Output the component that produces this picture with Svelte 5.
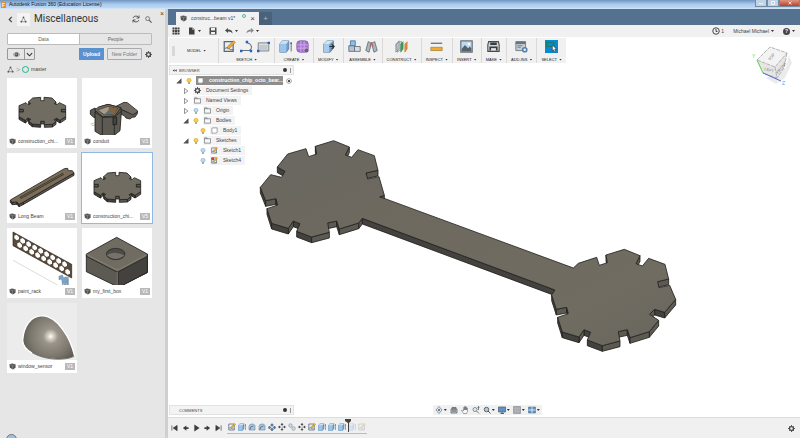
<!-- App.svelte
     CAD workspace: data panel on the left, modelling canvas on the right. -->
<script lang="ts">
  type Point = [number, number];

  interface Part {
    name: string;
    version: string;
    kind: string;
    selected?: boolean;
  }

  interface TreeRow {
    label: string;
    depth: number;
    open?: boolean;
    bulb?: 'on' | 'off';
    icon: string;
  }

  const parts: Part[] = [
    { name: 'construction_chi...', version: 'V1', kind: 'chip' },
    { name: 'conduit', version: 'V3', kind: 'conduit' },
    { name: 'Long Beam', version: 'V1', kind: 'beam' },
    { name: 'construction_chi...', version: 'V5', kind: 'chip', selected: true },
    { name: 'paint_rack', version: 'V1', kind: 'rack' },
    { name: 'my_first_box', version: 'V1', kind: 'box' },
    { name: 'window_sensor', version: 'V1', kind: 'sensor' },
  ];

  const tools = [
    { label: 'SKETCH', icons: ['sketch', 'spline', 'rect'] },
    { label: 'CREATE', icons: ['extrude', 'form'] },
    { label: 'MODIFY', icons: ['press'] },
    { label: 'ASSEMBLE', icons: ['component', 'joint'] },
    { label: 'CONSTRUCT', icons: ['plane'] },
    { label: 'INSPECT', icons: ['measure'] },
    { label: 'INSERT', icons: ['image'] },
    { label: 'MAKE', icons: ['print'] },
    { label: 'ADD-INS', icons: ['script'] },
    { label: 'SELECT', icons: ['select'] },
  ];

  const tree: TreeRow[] = [
    { label: 'Document Settings', depth: 1, open: false, icon: 'gear' },
    { label: 'Named Views', depth: 1, open: false, icon: 'folder' },
    { label: 'Origin', depth: 1, open: false, bulb: 'off', icon: 'folder' },
    { label: 'Bodies', depth: 1, open: true, bulb: 'on', icon: 'folder' },
    { label: 'Body1', depth: 2, bulb: 'on', icon: 'body' },
    { label: 'Sketches', depth: 1, open: true, bulb: 'on', icon: 'folder' },
    { label: 'Sketch1', depth: 2, bulb: 'off', icon: 'sketch' },
    { label: 'Sketch4', depth: 2, bulb: 'off', icon: 'sketchRed' },
  ];

  const playback = ['first', 'prev', 'play', 'next', 'last'];
  const features = ['sketch', 'extrude', 'fillet', 'fillet', 'pattern', 'move', 'mirror', 'move', 'sketch', 'extrude', 'extrude', 'extrude', 'extrude', 'sketch'];
  const rolledBack = 12;

  const navTools = [
    { name: 'orbit', menu: true },
    { name: 'look', menu: false },
    { name: 'hand', menu: false },
    { name: 'zoom', menu: false },
    { name: 'fit', menu: true },
    { name: 'display', menu: true },
    { name: 'grid', menu: true },
    { name: 'views', menu: true },
  ];

  // Everything is drawn on a 16 x 16 grid
  const icons: Record<string, string> = {
    sketch: '<path d="M1.500 2h11v12h-11z" fill="#e9edf0" stroke="#5b6670" stroke-width="1.500"/><path d="M2 11c4-4 5 2 11 1" fill="none" stroke="#33719f" stroke-width="1.200"/><path d="M5 10l2 1 8-8-2-2-7 7z" fill="#f2ae35" stroke="#96651b" stroke-width=".8"/>',
    sketchRed: '<path d="M1.500 2h11v12h-11z" fill="#e9edf0" stroke="#5b6670" stroke-width="1.500"/><path d="M1 1h6v6H1z" fill="#d83828"/><path d="M2 12c4-4 5 2 11 1" fill="none" stroke="#33719f" stroke-width="1.200"/><path d="M5 10l2 1 8-8-2-2-7 7z" fill="#f2ae35" stroke="#96651b" stroke-width=".8"/>',
    spline: '<path d="M2 13h7c7 0 7-8-1-10" fill="none" stroke="#68717a" stroke-width="1.300"/><path d="M0 12h3v3H0zM12 12h3v3h-3zM7 1h3v3H7z" fill="#2165c4"/>',
    rect: '<path d="M1.500 3.500h13v10h-13z" fill="#dce0e4" stroke="#68717a"/><path d="M3 6h10v6H3z" fill="#c3c9cf"/><path d="M0 12h3v3H0zM13 2h3v3h-3z" fill="#2165c4"/>',
    extrude: '<path d="M1 5l3-4h8v10l-3 4H1z" fill="#6b9fcf" stroke="#426c94" stroke-width=".8"/><path d="M1 5h8v10H1z" fill="#9bc4e8"/><path d="M1 5l3-4h8L9 5z" fill="#c9e0f4"/><path d="M15 3v11M14 5l1-2 1 2" stroke="#555" fill="none"/>',
    form: '<path d="M1 5q0-4 4-4h6q4 0 4 4v6q0 4-4 4H5q-4 0-4-4z" fill="#a774d0" stroke="#8656ae"/><path d="M1 6h14M1 10h14M6 1v14M10 1v14" stroke="#ddc2f2" fill="none" stroke-width=".8"/><circle cx="13" cy="13" r="2.500" fill="#6f5f78"/>',
    press: '<path d="M2 5l4-4h8v9l-4 5H2z" fill="#719dc3" stroke="#456c90" stroke-width=".8"/><path d="M2 5h7v10H2z" fill="#a9cbe9"/><path d="M2 5l4-4h8l-5 4z" fill="#d1e2f0"/><path d="M9 8h6M12 5l3 3-3 3" stroke="#27323c" fill="none" stroke-width="1.500"/>',
    component: '<path d="M1 7h7v7H1z" fill="#b8c2cc" stroke="#596775"/><path d="M3 1h6v6H3z" fill="#8fbfe5" stroke="#44749e"/><path d="M8 8h7v6H8z" fill="#d7dce1" stroke="#596775"/>',
    joint: '<path d="M1 13L4 2l4 2-3 11zM15 13L12 2 8 4l3 11z" fill="#aeb6bd" stroke="#606b74"/><path d="M6 8l2-5 2 5" fill="none" stroke="#c65a43" stroke-width="1.200"/>',
    plane: '<path d="M1 5l4-4v10l-4 4zM2 5l4-3h2v9l-5 4z" fill="#cbd1d6" stroke="#6b747b" stroke-width=".7"/><path d="M7 5l3-3v9l-3 4z" fill="#3aa25c" stroke="#1f6e39" stroke-width=".5"/><path d="M12 5l3-3v9l-3 4z" fill="#e98b39" stroke="#ae6225" stroke-width=".5"/>',
    measure: '<path d="M1 4h14" fill="none" stroke="#62686d" stroke-width="1.500"/><path d="M1 9h14v4H1z" fill="#efad2f" stroke="#9e752a" stroke-width=".8"/>',
    image: '<path d="M1 1h14v14H1z" fill="#bddaf1" stroke="#69737a" stroke-width="1.500"/><path d="M2 11l4-5 4 4 2-2 2 2v4H2z" fill="#56616a"/><circle cx="11" cy="5" r="1.500" fill="#fff"/>',
    print: '<path d="M2 2h12l1 4v8H1V6z" fill="#cfd2d5" stroke="#44494d" stroke-width="1.300"/><path d="M4 3h8v3H4zM3 8h10v5H3z" fill="#373d42"/><path d="M5 10h6v3H5z" fill="#e2e5e8"/>',
    script: '<path d="M1 2h12v11H1z" fill="#c4cbd1" stroke="#67717b"/><path d="M1 2h12v3H1z" fill="#68747e"/><path d="M3 7h6M3 9h4" stroke="#68747e"/><circle cx="12" cy="12" r="2.500" fill="#f2f4f6" stroke="#5380ad" stroke-width="2"/>',
    select: '<path d="M0 0h16v16H0z" fill="#068bd3"/><path d="M2 3h9v5H2z" fill="none" stroke="#147b68" stroke-width="1.300"/><path d="M9 6l5 5-2 .5 1.500 3-1.500.5-1.500-3L9 14z" fill="#fff" stroke="#263645" stroke-width=".8"/>',
    gear: '<circle cx="8" cy="8" r="4.500" fill="none" stroke="#464646" stroke-width="3"/><path d="M8 0v3M8 13v3M0 8h3M13 8h3M2.300 2.300l2 2M11.700 11.700l2 2M2.300 13.700l2-2M11.700 4.300l2-2" stroke="#464646" stroke-width="2"/>',
    folder: '<path d="M1 4h14v10H1zM1 4V2h6l1 2" fill="#f8f8f8" stroke="#656a6e" stroke-width="1.500"/>',
    body: '<path d="M2 4q0-2 2-2h10v9q0 3-3 3H2z" fill="#fff" stroke="#777" stroke-width="1.500"/>',
    fillet: '<path d="M2 14V7q0-5 6-5h3l3 3v9z" fill="#a8c8e4" stroke="#55728d"/><path d="M4 13q0-7 7-7" fill="none" stroke="#415c74" stroke-width="1.500"/>',
    pattern: '<path d="M8 1l3 3-3 3-3-3zM3 6l3 3-3 3-3-3zM13 6l3 3-3 3-3-3zM8 10l3 3-3 3-3-3z" fill="#4b7aa8" stroke="#2d465f" stroke-width=".7"/>',
    move: '<path d="M8 1v14M1 8h14" stroke="#474e54" stroke-width="1.500" stroke-dasharray="5 3"/><path d="M5 4l3-4 3 4zM5 12l3 4 3-4zM4 5L0 8l4 3zM12 5l4 3-4 3z" fill="#474e54"/>',
    mirror: '<circle cx="5" cy="5" r="3.500" fill="#c8dced" stroke="#6b8195"/><circle cx="11" cy="11" r="3.500" fill="#ddd" stroke="#6b747c"/>',
    first: '<path d="M2 2v12M14 2L5 8l9 6z" fill="#3c3c3c" stroke="#3c3c3c" stroke-width="1.500"/>',
    prev: '<path d="M10 2L2 8l8 6zM10 6h5v4h-5z" fill="#3c3c3c"/>',
    play: '<path d="M3 0l12 8-12 8z" fill="#3c3c3c"/>',
    next: '<path d="M6 2l8 6-8 6zM1 6h5v4H1z" fill="#3c3c3c"/>',
    last: '<path d="M14 2v12M2 2l9 6-9 6z" fill="#3c3c3c" stroke="#3c3c3c" stroke-width="1.500"/>',
    orbit: '<path d="M8 1l6 7-6 7-6-7z" fill="none" stroke="#69747e" stroke-width="1.400"/><circle cx="8" cy="8" r="2.500" fill="#4f85b6"/>',
    look: '<path d="M2 6h12v8H2zM4 3h8v3H4z" fill="#c6cbcf" stroke="#555d64" stroke-width="1.500"/><path d="M4 10h8" stroke="#555d64" stroke-width="2"/>',
    hand: '<path d="M5 15L1 9l2-1 2 2V3h2v5-7h2v7-6h2v6-4h2v7l-2 4z" fill="#f7f7f7" stroke="#5b6268" stroke-width="1.100"/>',
    zoom: '<circle cx="6" cy="7" r="4" fill="#e3edf5" stroke="#657079" stroke-width="1.500"/><path d="M9 10l5 5M13 1v7M11 3l2-2 2 2" fill="none" stroke="#4e565d" stroke-width="1.500"/>',
    fit: '<circle cx="7" cy="7" r="4.500" fill="#b7c7d5" stroke="#5d666e" stroke-width="2"/><path d="M10 10l5 5" stroke="#4e565d" stroke-width="2"/>',
    display: '<path d="M1 2h14v10H1z" fill="#5b94c8" stroke="#53616f" stroke-width="1.500"/><path d="M5 15h7M8 12v3" stroke="#53616f" stroke-width="2"/>',
    grid: '<path d="M1 1h14v14H1z" fill="#a4a9ae" stroke="#737a80"/><path d="M1 5h14M1 10h14M5 1v14M10 1v14" stroke="#c4c8cb" stroke-width=".7"/>',
    views: '<path d="M1 2h14v12H1z" fill="#5d91c2" stroke="#3c688f"/><path d="M8 2v12M1 8h14" stroke="#fff" stroke-width="1.500"/>',
    apps: '<path d="M1 1h4v4H1zM6 1h4v4H6zM11 1h4v4h-4zM1 6h4v4H1zM6 6h4v4H6zM11 6h4v4h-4zM1 11h4v4H1zM6 11h4v4H6zM11 11h4v4h-4z" fill="#3f3f3f"/>',
    file: '<path d="M2 1h7l4 4v10H2z" fill="#3f3f3f"/><path d="M9 1v4h4" fill="none" stroke="#eee"/>',
    save: '<path d="M1 1h14v14H1z" fill="#494949"/><path d="M4 2h8v5H4zM4 10h8v4H4z" fill="#f1f1f1"/>',
    undo: '<path d="M6 2L0 7l6 5V9q6-1 9 4 0-8-9-8z" fill="#4a4a4a"/>',
    redo: '<path d="M10 2l6 5-6 5V9q-6-1-9 4 0-8 9-8z" fill="#8c8c8c"/>',
    chevron: '<path d="M11 2L5 8l6 6" fill="none" stroke="#3c3c3c" stroke-width="2.500"/>',
    down: '<path d="M2 5l6 6 6-6" fill="none" stroke="#333" stroke-width="2.500"/>',
    project: '<path d="M8 3L3 13h10z" fill="none" stroke="#555" stroke-width="1.200"/><circle cx="8" cy="3" r="2" fill="#555"/><circle cx="3" cy="13" r="2" fill="#555"/><circle cx="13" cy="13" r="2" fill="#555"/>',
    refresh: '<path d="M14 6A6.500 6.500 0 0 0 2 6M2 10a6.500 6.500 0 0 0 12 0M14 1v5h-5M2 15v-5h5" fill="none" stroke="#444" stroke-width="1.700"/>',
    search: '<circle cx="6" cy="6" r="4.500" fill="none" stroke="#555" stroke-width="1.700"/><path d="M9.500 9.500L15 15" stroke="#555" stroke-width="2.500"/>',
    eye: '<path d="M0 8q8-10 16 0-8 10-16 0z" fill="none" stroke="#555"/><circle cx="8" cy="8" r="4.500" fill="#555"/><circle cx="7" cy="7" r="1.500" fill="#ddd"/>',
    cube: '<path d="M1 3l6-2 8 2v8l-6 4-7-4z" fill="#555"/><path d="M1 3l7 3v9M8 6l7-3" fill="none" stroke="#aaa"/>',
    clock: '<circle cx="8" cy="8" r="6.500" fill="none" stroke="#444" stroke-width="2"/><path d="M8 4v5h3" fill="none" stroke="#444" stroke-width="2"/>',
    bulbOn: '<path d="M5 11Q0 6 4 2q4-3 8 0 4 4-1 9z" fill="#ffcf3c" stroke="#b98b1d"/><path d="M6 12h4v3H6z" fill="#666"/>',
    bulbOff: '<path d="M5 11Q0 6 4 2q4-3 8 0 4 4-1 9z" fill="#bcdcf6" stroke="#5f8cb5"/><path d="M6 12h4v3H6z" fill="#666"/>',
    target: '<circle cx="8" cy="8" r="6.500" fill="#fff" stroke="#555" stroke-width="1.300"/><circle cx="8" cy="8" r="3" fill="#333"/>',
    closed: '<path d="M4 1l9 7-9 7z" fill="#fff" stroke="#444" stroke-width="1.500"/>',
    opened: '<path d="M14 2v12H2z" fill="#555" stroke="#333"/>',
    rewind: '<path d="M8 4L2 8l6 4zM15 4L9 8l6 4z" fill="#444"/>',
  };

  const discRight: Point[] = [
    [130, 99], [145, 85], [200, 67], [208, 91], [232, 83], [228, 60], [283, 43], [330, 62], [318, 86], [337, 93],
    [356, 70], [405, 88], [416, 132], [383, 140], [387, 158], [419, 151], [437, 193], [404, 232], [374, 223],
    [359, 238], [386, 256], [358, 290], [300, 308], [292, 284], [265, 290], [270, 318], [217, 332], [172, 315],
    [182, 292], [162, 284], [147, 306], [97, 291], [83, 247], [115, 236], [110, 217], [79, 223], [65, 180], [75, 165],
  ];

  const discLeft: Point[] = [
    [369, 276], [358, 290], [300, 308], [292, 284], [265, 290], [270, 318], [217, 332], [172, 315], [182, 292],
    [162, 284], [147, 306], [97, 291], [83, 247], [115, 236], [110, 217], [79, 223], [63, 183], [94, 145], [127, 153],
    [137, 135], [114, 122], [145, 83], [200, 67], [208, 91], [232, 83], [228, 60], [283, 43], [330, 62], [318, 86],
    [337, 93], [356, 70], [405, 88], [416, 132], [380, 140], [385, 158], [419, 151], [435, 207], [421, 212], [437, 217],
  ];

  const shift = (points: Point[], dx: number, dy: number): Point[] => points.map(([x, y]) => [x + dx, y + dy]);
  const join = (points: Point[]) => points.map((p) => p.join(',')).join(' ');

  // Side walls of a flat plate; only edges running leftwards face the camera
  function walls(points: Point[], depth: number) {
    const out: { shape: string; y: number; dark: boolean }[] = [];
    points.forEach((a, i) => {
      const b = points[(i + 1) % points.length];
      if (b[0] >= a[0]) return;
      out.push({
        shape: join([a, b, [b[0], b[1] + depth], [a[0], a[1] + depth]]),
        y: a[1] + b[1],
        dark: b[1] < a[1],
      });
    });
    return out.sort((m, n) => m.y - n.y);
  }

  const model = [...shift(discLeft, -47, -11), ...shift(discRight, 825, 315)];

  const chip: Point[] = [
    [77, 60], [101, 58], [101, 68], [111, 68], [111, 58], [135, 60], [147, 72], [142, 77], [150, 80], [157, 74],
    [176, 83], [176, 94], [163, 94], [163, 102], [176, 102], [176, 116], [159, 127], [149, 121], [141, 125],
    [147, 131], [136, 139], [112, 140], [112, 130], [101, 130], [101, 140], [76, 138], [65, 129], [71, 124],
    [63, 120], [55, 127], [36, 116], [36, 102], [49, 102], [49, 94], [36, 94], [36, 83], [57, 74], [63, 80],
    [71, 77], [65, 71],
  ];
  const longBeam: Point[] = [
    [10, 141], [172, 47], [182, 46], [184, 53], [196, 53], [201, 60], [48, 148], [36, 154], [30, 147], [16, 148],
  ];

  // Two staggered rows of holes across the rack
  const holes = Array.from({ length: 18 }, (_, i) => {
    const col = Math.floor(i / 2);
    return { x: 29 + col * 18 + (i % 2) * 9, y: 28 + col * 10 + (i % 2) * 23 };
  });

  let tab = $state('Data');
</script>

{#snippet icon(name: string)}
  <svg class="icon" viewBox="0 0 16 16" aria-hidden="true">{@html icons[name]}</svg>
{/snippet}

{#snippet plate(points: Point[], depth: number)}
  {#each walls(points, depth) as wall}
    <polygon class="wall" class:dark={wall.dark} points={wall.shape} />
  {/each}
  <polygon class="face" points={join(points)} />
{/snippet}

{#snippet dock(title: string)}
  <div class="dock">
    <span class="dock-lead">{#if title === 'BROWSER'}{@render icon('rewind')}{/if}</span>
    <span>{title}</span>
    <button class="dot" aria-label="Options for {title}"></button>
    <i class="grip"></i>
  </div>
{/snippet}

<div class="app">
  <header class="titlebar">
    <span class="logo">F</span>
    <span>Autodesk Fusion 360 (Education License)</span>
    <div class="window-buttons">
      <button aria-label="Minimize"><svg viewBox="0 0 12 8"><path d="M3 5h6" /></svg></button>
      <button aria-label="Restore"><svg viewBox="0 0 12 8"><path d="M4 2h4v4H4z" /></svg></button>
      <button class="quit" aria-label="Quit"><svg viewBox="0 0 12 8"><path d="M4 2l4 4M8 2L4 6" /></svg></button>
    </div>
  </header>

  <div class="workspace">
    <aside class="data-panel">
      <div class="panel-head">
        <button class="plain" aria-label="Back">{@render icon('chevron')}</button>
        <span class="project">{@render icon('project')}</span>
        <h1>Miscellaneous</h1>
        <button class="plain large" aria-label="Refresh">{@render icon('refresh')}</button>
        <button class="plain" aria-label="Search">{@render icon('search')}</button>
        <button class="close" aria-label="Close panel">×</button>
      </div>

      <div class="tabs">
        {#each ['Data', 'People'] as name}
          <button class:active={tab === name} onclick={() => (tab = name)}>{name}</button>
        {/each}
      </div>

      <div class="actions">
        <div class="split">
          <button aria-label="Show">{@render icon('eye')}</button>
          <button aria-label="Show options">{@render icon('down')}</button>
        </div>
        <button class="upload">Upload</button>
        <button class="new-folder">New Folder</button>
        <button class="plain" aria-label="Settings">{@render icon('gear')}</button>
      </div>

      <nav class="crumbs">
        {@render icon('project')}
        <span class="sep">&gt;</span>
        <i class="ring"></i>
        <a href="#master">master</a>
      </nav>

      <div class="cards">
        {#each parts as part}
          <article class="card" class:selected={part.selected}>
            <svg class="thumb" class:shaded={part.kind === 'sensor'} viewBox="0 0 210 171" aria-hidden="true">
              {#if part.kind === 'chip'}
                {@render plate(chip, 8)}
              {:else if part.kind === 'beam'}
                <g class="bronze">
                  {@render plate(longBeam, 7)}
                </g>
                <path class="slot" d="M40 135L169 62" />
                <path class="slot-floor" d="M42 134L167 63" />
              {:else if part.kind === 'conduit'}
                <path d="M26 139l9-4M30 143l8-2M98 170l10 3" stroke="#bbb" stroke-width="3" />
                <path class="wall" d="M25 97l14-7 8 10-4 20-8-2-10-9z" />
                <path class="wall" d="M101 88l51 20 14-9v8l-7 10-9 1-6 5-12-3-4-6-27-14z" />
                <path class="face" d="M100 86l26-13 10 1 30 24v5l-14 7z" />
                <path class="wall" d="M39 102l11-14 28-9 39 11 1 12-4 56-18 14-35 1-22-13z" />
                <path d="M39 102l22 16 36-1v54M61 118v53M97 117l20-16" fill="none" stroke="#25231f" stroke-width="2.500" />
                <path class="face" d="M38 96l12-9 28-8 39 10-19 25-36 2z" />
                <path d="M47 96l31-11 30 7-14 17-28 1z" fill="#a79a88" stroke="#332b22" stroke-width="2" />
                <path d="M80 86l27 7-13 16-14-10z" fill="#83633a" />
                <path d="M66 110l14-14 14 13z" fill="#5f6d6e" />
                <path class="wall dark" d="M93 117h11v22l-11 2z" />
              {:else if part.kind === 'rack'}
                <path d="M18 97l135 75" stroke="#ccc" stroke-width="2" />
                <path class="rack" d="M18 12l176 97v41L18 53z" />
                {#each holes as hole}
                  <polygon fill="#fff" points={join([[hole.x - 7, hole.y - 5], [hole.x, hole.y - 8], [hole.x + 7, hole.y - 1], [hole.x + 7, hole.y + 6], [hole.x, hole.y + 9], [hole.x - 7, hole.y + 3]])} />
                {/each}
                <path d="M156 145l10-4 3 8 8-2 7 2v26h-4v-18l-4 18h-4v-16l-5 14-3-20-8 2z" fill="#7aa6cd" stroke="#5f7f9a" stroke-width="1.500" />
              {:else if part.kind === 'box'}
                <path d="M20 134l86 42 90-44-90-10z" fill="#ddd" />
                <path class="wall" d="M13 82l95 50 88-50v52l-78 39q-10 5-18 0l-87-42z" />
                <path class="wall dark" d="M108 130l88-51v54l-80 42-8-3z" />
                <path class="face" d="M13 78l91-50 92 50v7l-83 44q-7 5-14 0L13 85z" />
                <path d="M17 81l82 42q8 4 15 0l78-42M106 130v45" fill="none" stroke="#8f8a7f" stroke-width="2" />
                <ellipse cx="101" cy="78" rx="28" ry="17" fill="#4e4b46" stroke="#222" stroke-width="2" />
                <path d="M74 82q20-16 54 0-27 22-54 0z" fill="#777269" />
              {:else}
                <defs>
                  <radialGradient id="dome" gradientUnits="userSpaceOnUse" cx="131" cy="100" r="90">
                    <stop offset="0" stop-color="#fffdf8" />
                    <stop offset=".1" stop-color="#d5cfc6" />
                    <stop offset=".25" stop-color="#9a948b" />
                    <stop offset=".65" stop-color="#7d796f" />
                    <stop offset="1" stop-color="#5a5750" />
                  </radialGradient>
                </defs>
                <path d="M47 112C50 70 70 38 108 38c42 4 82 62 95 122-28 16-93 12-128-10q-27-15-28-38z" fill="url(#dome)" stroke="#fff" stroke-width="4" />
                <path d="M75 149c35 22 98 26 127 11" fill="none" stroke="#43413d" stroke-width="2" />
              {/if}
            </svg>
            <footer>
              {@render icon('cube')}
              <span class="part-name">{part.name}</span>
              <span class="version">{part.version}</span>
            </footer>
          </article>
        {/each}
      </div>
      <i class="badge"></i>
    </aside>

    <main>
      <div class="doc-tabs">
        <div class="doc-tab">
          {@render icon('cube')}
          <span>construc...beam v1*</span>
          <i class="status"></i>
          <button aria-label="Close document">×</button>
        </div>
        <button class="add-tab" aria-label="New document">+</button>
      </div>

      <div class="quick">
        <button aria-label="Show data panel">{@render icon('apps')}</button>
        <button aria-label="File">{@render icon('file')}<i class="caret"></i></button>
        <button aria-label="Save">{@render icon('save')}</button>
        <button aria-label="Undo">{@render icon('undo')}<i class="caret"></i></button>
        <button aria-label="Redo">{@render icon('redo')}<i class="caret"></i></button>
        <div class="account">
          <button aria-label="Job status">{@render icon('clock')}1</button>
          <button>Michael Michael<i class="caret"></i></button>
          <button aria-label="Help"><b class="help">?</b><i class="caret"></i></button>
        </div>
      </div>

      <div class="stage">
        <div class="toolbar">
          <i class="handle"></i>
          <button class="mode">MODEL<i class="caret"></i></button>
          {#each tools as group}
            <div class="group">
              <div class="group-icons">
                {#each group.icons as name}
                  <button aria-label={name}>{@render icon(name)}</button>
                {/each}
              </div>
              <button class="menu">{group.label}<i class="caret"></i></button>
            </div>
          {/each}
        </div>

        <div class="viewport">
          <svg class="model" viewBox="168 63 632 354" role="img" aria-label="construction_chip_octo_beam">
            <defs>
              <linearGradient id="steel" x1="0" y1="0" x2="1" y2="1">
                <stop offset="0" stop-color="#6a6762" />
                <stop offset=".3" stop-color="#6d695f" />
                <stop offset=".8" stop-color="#706c61" />
                <stop offset="1" stop-color="#68655e" />
              </linearGradient>
            </defs>
            <g transform="translate(255 130) scale(.33333)">
              {@render plate(model, 17)}
            </g>
          </svg>

          <section class="browser">
            {@render dock('BROWSER')}
            <div class="row root">
              {@render icon('opened')}
              {@render icon('bulbOn')}
              <span class="root-label">{@render icon('body')}<span>construction_chip_octo_bear...</span></span>
              {@render icon('target')}
            </div>
            {#each tree as row}
              <div class="row" class:nested={row.depth === 2}>
                {#if row.open !== undefined}
                  {@render icon(row.open ? 'opened' : 'closed')}
                {/if}
                {#if row.bulb}
                  {@render icon(row.bulb === 'on' ? 'bulbOn' : 'bulbOff')}
                {/if}
                <span class="node">{@render icon(row.icon)}<span>{row.label}</span></span>
              </div>
            {/each}
          </section>

          <div class="bottom">
            {@render dock('COMMENTS')}
            <div class="nav-bar">
              {#each navTools as tool}
                <button aria-label={tool.name}>{@render icon(tool.name)}{#if tool.menu}<i class="caret"></i>{/if}</button>
              {/each}
            </div>
          </div>
        </div>

        <svg class="view-cube" viewBox="0 0 50 44" aria-label="View cube">
          <path d="M20 33l20-10 3-13 3 8-7 15-9 6z" fill="#ddd" opacity=".6" />
          <path d="M11 15L24 2l17 6-3 15-7 10-14-5z" fill="#e6e6e6" />
          <path d="M11 15L24 2l17 6-12 14z" fill="#f3f3f3" />
          <path d="M11 15L24 2l17 6-12 14zM29 22l2 11-14-5-6-13M41 8l-3 15-7 10" fill="none" stroke="#999" stroke-width=".7" stroke-dasharray="4 1" />
          <text x="24" y="16" transform="rotate(-50 24 16)">TOP</text>
          <text x="18" y="25" transform="rotate(15 18 25)">LEFT</text>
          <text x="32" y="29" transform="rotate(-50 32 29)">FRONT</text>
          <path d="M17 28l-6-13" stroke="#5be35b" />
          <path d="M17 28l18 8" stroke="#5267d8" />
          <text class="axis-y" x="6" y="13">Y</text>
          <text class="axis-z" x="36" y="40">Z</text>
        </svg>
      </div>

      <footer class="timeline">
        <div class="playback">
          {#each playback as name}
            <button aria-label={name}>{@render icon(name)}</button>
          {/each}
        </div>
        <div class="features">
          {#each features as feature, i}
            <span class="feature" class:faded={i >= rolledBack}>{@render icon(feature)}</span>
          {/each}
          <svg class="marker" viewBox="0 0 6 13" aria-hidden="true"><path d="M0 0h6v2L4 4v9H3V4L0 2z" /></svg>
        </div>
        <button class="prefs" aria-label="Preferences">{@render icon('gear')}</button>
      </footer>
    </main>
  </div>
</div>

<style>
  :global(body) {
    background: #fff;
  }

  .app {
    display: flex;
    flex-direction: column;
    height: 100vh;
    overflow: hidden;
    font-family: 'Liberation Sans', Arial, sans-serif;
    font-size: 5px;
    line-height: 7px;
    color: #444;
  }

  .app :global(*) {
    box-sizing: border-box;
  }

  button {
    display: flex;
    align-items: center;
    justify-content: center;
    padding: 0;
    border: 0;
    background: none;
    font: inherit;
    color: inherit;
  }

  a {
    color: inherit;
    text-decoration: none;
  }

  .icon {
    display: block;
    flex: none;
    width: 7px;
    height: 7px;
  }

  .caret {
    width: 3px;
    height: 2px;
    margin-left: 2px;
    background: #333;
    clip-path: polygon(0 0, 100% 0, 50% 100%);
  }

  /* Window frame */
  .titlebar {
    display: flex;
    flex: none;
    align-items: center;
    gap: 3px;
    height: 9px;
    padding-left: 1px;
    background: linear-gradient(#7096c2, #8fb1d8 25%, #a9cbef 45%, #bad8f5 85%, #dbe9f6);
    color: #111;
  }

  .logo {
    width: 5px;
    height: 6px;
    background: #e98a24;
    color: #fff;
    font-weight: 700;
    text-align: center;
    line-height: 6px;
  }

  .window-buttons {
    display: flex;
    align-self: flex-start;
    margin-left: auto;
  }

  .window-buttons button {
    width: 12px;
    height: 7px;
    border: 1px solid #718ba7;
    border-top: 0;
    background: #c2d3e5;
  }

  .window-buttons .quit {
    width: 21px;
    background: linear-gradient(#dc9582, #bf3f24);
  }

  .window-buttons svg {
    width: 10px;
    height: 6px;
    fill: none;
    stroke: #fff;
  }

  .workspace {
    display: flex;
    flex: 1;
    min-height: 0;
  }

  /* Data panel */
  .data-panel {
    position: relative;
    flex: none;
    width: 168px;
    padding: 3px 13px 0 7px;
    border-right: 3px solid #cfcfcf;
    background: #e6e6e6;
    overflow: hidden;
  }

  .panel-head {
    display: flex;
    align-items: center;
    gap: 3px;
    height: 14px;
  }

  .project {
    display: grid;
    place-items: center;
    width: 13px;
    height: 13px;
    margin-right: 1px;
    background: #f4f4f4;
  }

  h1 {
    flex: 1;
    margin: 0;
    font-family: Roboto, 'Liberation Sans', sans-serif;
    font-size: 10px;
    font-weight: 400;
    line-height: 14px;
    color: #333;
  }

  .large .icon {
    width: 8px;
    height: 8px;
    margin-right: 2px;
  }

  .close {
    position: absolute;
    top: 1px;
    right: 1px;
    font-size: 7px;
  }

  .tabs {
    display: flex;
    height: 12px;
    margin-top: 7px;
    border: 1px solid #bbb;
    border-radius: 1px;
  }

  .tabs button {
    flex: 1;
    color: #666;
  }

  .tabs .active {
    background: #fff;
    border-right: 1px solid #bbb;
  }

  .actions {
    display: flex;
    align-items: center;
    gap: 3px;
    height: 12px;
    margin-top: 3px;
  }

  .split {
    display: flex;
    height: 12px;
    margin-right: auto;
    border: 1px solid #999;
    border-radius: 1px;
  }

  .split button {
    width: 16px;
  }

  .split button + button {
    width: 10px;
    border-left: 1px solid #999;
  }

  .upload {
    width: 25px;
    height: 12px;
    background: #5a91cf;
    color: #fff;
    font-weight: 700;
  }

  .new-folder {
    width: 35px;
    height: 12px;
    border: 1px solid #aaa;
    border-radius: 1px;
    color: #777;
  }

  .crumbs {
    display: flex;
    align-items: center;
    gap: 2px;
    height: 7px;
    margin: 6px 0 5px;
  }

  .sep {
    color: #999;
    font-size: 7px;
  }

  .ring {
    width: 7px;
    height: 7px;
    border: 1px solid #20b193;
    border-radius: 50%;
  }

  .cards {
    display: grid;
    grid-template-columns: 1fr 1fr;
    gap: 5px;
  }

  .card {
    background: #fff;
    outline: 1px solid transparent;
  }

  .card.selected {
    outline-color: #91b9e8;
  }

  .thumb {
    display: block;
    width: 100%;
    height: 57px;
  }

  .shaded {
    background: #ececec;
  }

  .face {
    fill: #706c61;
    stroke: #24231f;
    stroke-width: 2.5;
    stroke-linejoin: round;
  }

  .wall {
    fill: #5d5a54;
    stroke: #1f1e1c;
    stroke-width: 2.5;
    stroke-linejoin: round;
  }

  .wall.dark {
    fill: #44423e;
  }

  .model .face {
    fill: url(#steel);
  }

  .bronze .face {
    fill: #7b6d5a;
  }

  .slot {
    fill: none;
    stroke: #3b352b;
    stroke-width: 7;
  }

  .slot-floor {
    fill: none;
    stroke: #6a5f50;
    stroke-width: 3;
  }

  .rack {
    fill: #594b3c;
    stroke: #2c241c;
    stroke-width: 2;
  }

  .card footer {
    display: flex;
    align-items: center;
    gap: 2px;
    height: 13px;
    padding: 0 2px;
  }

  .part-name {
    flex: 1;
    white-space: nowrap;
  }

  .version {
    width: 10px;
    background: #b8b8b8;
    color: #fff;
    text-align: center;
  }

  .badge {
    position: absolute;
    left: 6px;
    bottom: -7px;
    width: 11px;
    height: 11px;
    border: 1px solid #777;
    border-radius: 50%;
    background: #9dbfe6;
  }

  /* Document area */
  main {
    display: flex;
    flex: 1;
    flex-direction: column;
    min-width: 0;
  }

  .doc-tabs {
    display: flex;
    flex: none;
    align-items: flex-end;
    height: 16px;
    padding-left: 8px;
    background: #54728f;
  }

  .doc-tab {
    display: flex;
    align-items: center;
    gap: 4px;
    width: 83px;
    height: 13px;
    padding: 0 4px;
    background: #f1f1f1;
    white-space: nowrap;
  }

  .doc-tab button {
    margin-left: auto;
    font-size: 8px;
  }

  .status {
    width: 4px;
    height: 4px;
    margin: 0 0 5px 3px;
    border: 1px solid #52b8a0;
    border-radius: 50%;
  }

  .add-tab {
    width: 13px;
    height: 13px;
    background: #496179;
    color: #adbdcc;
    font-size: 8px;
  }

  .quick {
    display: flex;
    flex: none;
    align-items: center;
    gap: 8px;
    height: 12px;
    padding: 0 5px 0 4px;
    background: #f1f1f1;
  }

  .quick .icon {
    width: 8px;
    height: 8px;
  }

  .account {
    display: flex;
    gap: 9px;
    margin-left: auto;
  }

  .account .icon {
    margin-right: 1px;
  }

  .help {
    width: 7px;
    height: 7px;
    border-radius: 50%;
    background: #444;
    color: #fff;
  }

  .stage {
    position: relative;
    display: flex;
    flex: 1;
    flex-direction: column;
    min-height: 0;
  }

  .toolbar {
    display: flex;
    align-self: flex-start;
    height: 25px;
    margin: 1px 0 0 1px;
    background: #f1f1f1;
    font-size: 4px;
    color: #222;
  }

  .handle {
    align-self: center;
    width: 3px;
    height: 10px;
    margin-left: 3px;
    background: #d8d8d8;
  }

  .mode {
    width: 43px;
  }

  .group {
    display: flex;
    flex-direction: column;
    align-items: center;
    justify-content: space-between;
    padding: 2px 4px 0;
    border-left: 1px solid #d9d9d9;
  }

  .group-icons {
    display: flex;
    gap: 4px;
  }

  .group-icons .icon {
    width: 13px;
    height: 13px;
  }

  .viewport {
    position: relative;
    display: flex;
    flex: 1;
    flex-direction: column;
    justify-content: space-between;
    min-height: 0;
  }

  .model {
    position: absolute;
    inset: 0;
    width: 100%;
    height: 100%;
  }

  .view-cube {
    position: absolute;
    top: 8px;
    right: 4px;
    width: 50px;
    height: 44px;
  }

  .view-cube text {
    fill: #777;
    font-size: 4px;
  }

  .view-cube .axis-y {
    fill: #4fdc4f;
    font-size: 5px;
  }

  .view-cube .axis-z {
    fill: #5aa0e0;
    font-size: 5px;
  }

  .browser,
  .bottom {
    position: relative;
  }

  .browser {
    display: flex;
    flex-direction: column;
    gap: 1px;
    padding: 2px 0 0 1px;
  }

  .dock {
    display: flex;
    flex: none;
    align-items: center;
    width: 125px;
    height: 10px;
    padding: 0 2px;
    border: 1px solid #e2e2e2;
    background: #f3f3f3;
    font-size: 4px;
    color: #444;
  }

  .dock-lead {
    width: 7px;
  }

  .dock-lead .icon {
    width: 5px;
  }

  .dot {
    width: 4px;
    height: 4px;
    margin-left: auto;
    border-radius: 50%;
    background: #333;
  }

  .grip {
    width: 2px;
    height: 5px;
    margin-left: 2px;
    border-right: 1px solid #999;
  }

  .row {
    display: flex;
    align-items: center;
    gap: 3px;
    height: 9px;
    padding-left: 14px;
  }

  .row > .icon {
    width: 6px;
    height: 6px;
    margin-right: 1px;
  }

  .root {
    padding-left: 7px;
  }

  .nested {
    padding-left: 31px;
  }

  .node,
  .root-label {
    display: flex;
    align-items: center;
    gap: 5px;
    height: 9px;
    padding: 0 4px 0 1px;
    background: #f3f3f3;
    white-space: nowrap;
  }

  .root-label {
    width: 87px;
    background: #8d8d8d;
    color: #fff;
    font-weight: 700;
    overflow: hidden;
  }

  .bottom {
    display: flex;
    align-items: center;
    padding: 0 0 2px 1px;
  }

  .nav-bar {
    display: flex;
    align-items: center;
    gap: 3px;
    height: 10px;
    margin: 0 auto 0 22%;
    padding: 0 2px;
    background: #f1f1f1;
  }

  .nav-bar .icon {
    width: 8px;
    height: 8px;
  }

  .nav-bar .caret {
    margin-left: 1px;
  }

  /* Timeline */
  .timeline {
    display: flex;
    flex: none;
    align-items: center;
    height: 21px;
    padding: 0 5px 0 3px;
    border-top: 1px solid #ddd;
    background: #f0f0f0;
  }

  .playback {
    display: flex;
    gap: 4px;
  }

  .playback .icon {
    height: 8px;
  }

  .features {
    position: relative;
    display: flex;
    margin-left: 5px;
  }

  .feature {
    display: grid;
    justify-items: center;
    width: 10px;
    height: 12px;
    padding-top: 1px;
    border-bottom: 1px solid #bbb;
  }

  .feature .icon {
    width: 8px;
    height: 8px;
  }

  .faded .icon {
    opacity: 0.3;
  }

  .marker {
    position: absolute;
    top: -3px;
    left: 118px;
    width: 6px;
    height: 13px;
    fill: #444;
  }

  .prefs {
    margin-left: auto;
  }
</style>
